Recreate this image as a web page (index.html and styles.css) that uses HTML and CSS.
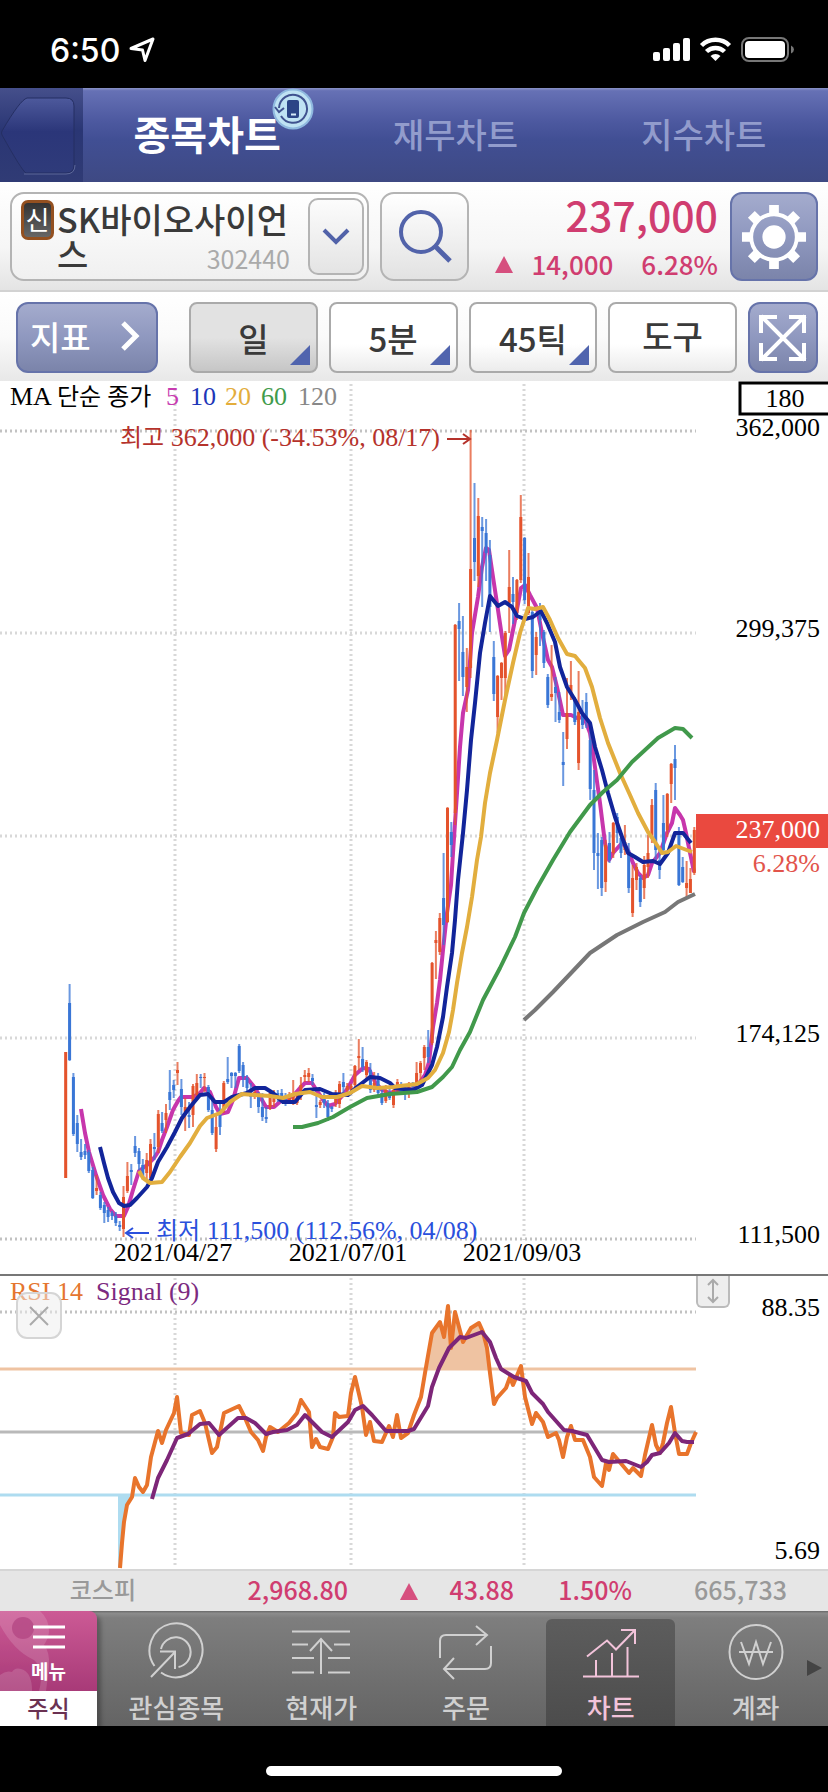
FILE: index.html
```html
<!DOCTYPE html>
<html lang="ko">
<head>
<meta charset="utf-8">
<meta name="viewport" content="width=device-width">
<title>종목차트</title>
<link rel="stylesheet" href="styles.css">
</head>
<body>
<header class="status">
  <span class="clock">6:50</span>
  <svg class="loc" viewBox="0 0 28 28"><path d="M3 12.500 25 3 17 24.500 14.500 14z" fill="none" stroke="#fff" stroke-width="3" stroke-linejoin="round"/></svg>
  <svg class="signals" viewBox="0 0 142 26">
    <g fill="#fff"><rect x="0" y="15" width="7" height="9" rx="2"/><rect x="10" y="11" width="7" height="13" rx="2"/><rect x="20" y="6" width="7" height="18" rx="2"/><rect x="30" y="1" width="7" height="23" rx="2"/></g>
    <g fill="none" stroke="#fff" stroke-width="4.500"><path d="M48.500 8.500a20 20 0 0 1 28 0"/><path d="M53.500 14.500a13 13 0 0 1 18 0"/></g>
    <path d="M57.500 19a7.500 7.500 0 0 1 10 0l-5 5z" fill="#fff"/>
    <rect x="89" y="1" width="46" height="23" rx="7" fill="none" stroke="#777" stroke-width="2"/>
    <rect x="92" y="4" width="40" height="17" rx="4" fill="#fff"/>
    <path d="M138 8.500q3 1.500 3 4t-3 4z" fill="#777"/>
  </svg>
</header>

<nav class="tabs">
  <button class="back" aria-label="뒤로"><svg viewBox="0 0 83 94">
    <defs><linearGradient id="bk" x2="0" y2="1"><stop offset="0" stop-color="#4d599c"/><stop offset=".45" stop-color="#2b3679"/><stop offset="1" stop-color="#2f3b7a"/></linearGradient></defs>
    <path d="M27 10h39q8 0 8 8v59q0 8-8 8H26Q22 83 2 47 1 45 2 43 20 12 27 10z" fill="url(#bk)" stroke="#252f63"/><path d="M24 86h42q9 0 9-9" fill="none" stroke="#5c6799"/>
  </svg></button>
  <button class="tab on">종목차트
    <svg class="rot" viewBox="0 0 42 42"><circle cx="21" cy="21" r="19.500" fill="#bfe2f3" stroke="#8fb8df" stroke-width="2"/><path d="M7 20A14 14 0 1 1 9 28" fill="none" stroke="#40528f" stroke-width="2"/><path d="M3 19l4 5 5-4" fill="none" stroke="#40528f" stroke-width="2"/><rect x="15" y="12" width="12" height="18" rx="2" fill="#2b4486"/><path d="M19 26.500h5" stroke="#d5eaf8" stroke-width="2"/></svg>
  </button>
  <button class="tab">재무차트</button>
  <button class="tab">지수차트</button>
</nav>

<section class="stock">
  <div class="picker">
    <span class="mark">신</span>
    <h1 class="name">SK바이오사이언스</h1>
    <span class="code">302440</span>
    <button class="drop" aria-label="종목 선택"><svg viewBox="0 0 28 20"><path d="M2 3l12 12L26 3" fill="none" stroke="#5162a9" stroke-width="4"/></svg></button>
  </div>
  <button class="search" aria-label="검색"><svg viewBox="0 0 60 60"><circle cx="26" cy="25" r="20" fill="none" stroke="#5263aa" stroke-width="4"/><path d="M40 39l15 15" stroke="#5263aa" stroke-width="5"/></svg></button>
  <div class="quote">
    <strong class="price">237,000</strong>
    <span class="up"></span><span class="diff">14,000</span><span class="diff rate">6.28%</span>
  </div>
  <button class="blue gear" aria-label="설정"><svg viewBox="-34 -34 68 68" fill="#fff">
    <g id="teeth"><path d="M-5-33H5v10H-5zM-5 23H5v10H-5z"/><path d="M-33-5v10h10V-5zM23-5v10h10V-5z"/></g>
    <use href="#teeth" transform="rotate(45)"/>
    <circle r="23.500" fill="none" stroke="#fff" stroke-width="4"/><circle r="12"/></svg></button>
</section>

<section class="tools">
  <button class="blue indi">지표<svg viewBox="0 0 20 32"><path d="M3 3l13 13L3 29" fill="none" stroke="#fff" stroke-width="5"/></svg></button>
  <button class="tool sel">일</button>
  <button class="tool more">5분</button>
  <button class="tool more">45틱</button>
  <button class="tool">도구</button>
  <button class="blue full" aria-label="전체 화면"><svg viewBox="0 0 48 48"><path d="M2 2l44 44M46 2L2 46M2 19V3h16M30 3h15v16M2 29v16h16M30 45h15V29" fill="none" stroke="#fff" stroke-width="4"/></svg></button>
</section>

<main>
<section class="pane">
<svg class="chart" viewBox="0 381 828 893">
  <g class="grid"><path d="M0 633H696M0 836H696M0 1038H696M175 384V1240M351 384V1240M524 384V1240"/><path class="edge" d="M0 431H696M0 1239H696"/></g>
  <polyline class="ma m5" points="81,1109 85,1133 89,1152 96,1175 103,1195 110,1209 116,1216 124,1216 128,1207 133,1190 139,1171 147,1165 154,1158 158,1152 162,1140 167,1127 173,1110 178,1101 181,1097 193,1097 200,1093 204,1088 210,1092 216,1107 220,1114 228,1112 233,1100 239,1078 247,1078 255,1088 262,1100 266,1107 274,1107 282,1100 293,1096 300,1088 305,1083 312,1083 317,1091 324,1101 328,1106 335,1104 343,1095 348,1088 355,1075 363,1068 369,1069 375,1082 382,1090 390,1093 400,1090 413,1089 420,1082 425,1075 429,1062 433,1027 437,1003 440,980 443,950 447,913 451,885 453,853 457,793 460,747 463,713 468,690 472,633 478,597 482,567 486,548 489,550 493,577 498,610 502,637 505,656 509,650 515,620 521,588 525,585 530,595 537,608 542,633 548,660 552,667 557,687 563,715 571,715 577,718 584,717 590,733 594,760 600,803 605,843 609,860 613,853 622,843 627,848 633,863 638,873 643,878 648,875 652,863 660,853 667,833 672,823 675,808 680,815 683,820 686,833 688,843 694,872"/>
  <g id="candles"></g>
  <polyline class="ma m10" points="100,1147 104,1163 108,1178 113,1192 119,1203 124,1206 130,1205 137,1198 147,1187 152,1178 158,1162 167,1147 175,1132 182,1118 190,1107 200,1095 208,1094 215,1102 224,1102 232,1097 247,1093 255,1088 265,1088 273,1093 283,1102 295,1102 305,1090 320,1089 332,1094 348,1095 357,1087 370,1077 380,1078 390,1083 395,1088 413,1090 422,1085 427,1075 432,1065 437,1047 443,1017 447,987 452,953 455,920 458,880 463,833 467,790 471,740 475,703 480,653 485,623 490,596 498,606 505,602 512,607 517,616 525,619 533,617 541,611 547,623 555,642 560,667 567,687 575,700 582,713 590,723 595,747 602,770 608,793 615,817 622,837 628,853 635,857 643,862 653,861 660,864 668,853 675,833 683,833 691,843"/>
  <polyline class="ma m20" points="139,1171 143,1178 150,1183 162,1182 170,1172 180,1157 190,1143 200,1126 207,1118 220,1113 230,1102 242,1094 255,1095 270,1096 283,1098 295,1094 310,1092 322,1097 337,1097 350,1093 362,1086 377,1088 393,1087 400,1086 417,1084 428,1078 435,1070 443,1053 449,1032 453,1010 457,983 462,953 467,927 472,897 477,860 481,837 485,803 490,773 497,740 505,700 513,663 520,633 528,608 535,609 543,607 550,620 558,638 567,654 575,656 585,668 592,687 600,718 608,743 620,773 630,795 638,813 648,832 655,842 662,853 668,852 676,846 692,852"/>
  <polyline class="ma m60" points="293,1127 302,1127 318,1123 333,1117 350,1107 367,1098 390,1094 417,1092 432,1087 443,1077 452,1067 460,1050 470,1032 483,1000 500,968 515,937 524,913 537,888 553,860 570,832 590,805 603,792 617,780 632,762 645,750 658,738 675,728 683,729 692,738"/>
  <polyline class="ma m120" points="524,1020 535,1010 553,992 572,972 590,953 617,935 643,922 665,912 678,902 695,894"/>
  <text x="10" y="405">MA <tspan class="ko">단순 종가</tspan></text>
  <text x="166" y="405" fill="#c73bb0">5</text><text x="190" y="405" fill="#1d36b8">10</text><text x="225" y="405" fill="#e3ad3c">20</text><text x="261" y="405" fill="#3f9b4c">60</text><text x="298" y="405" fill="#888">120</text>
  <text x="120" y="446" fill="#b5322b"><tspan class="ko">최고</tspan> 362,000 (-34.53%, 08/17)</text>
  <path d="M447 439h23m-7-5l7 5-7 5" fill="none" stroke="#b5322b" stroke-width="2"/>
  <text x="156" y="1239" fill="#2a50dc"><tspan class="ko">최저</tspan> 111,500 (112.56%, 04/08)</text>
  <path d="M149 1233h-23m7-5l-7 5 7 5" fill="none" stroke="#2a50dc" stroke-width="2"/>
  <g text-anchor="middle"><text x="173" y="1261">2021/04/27</text><text x="348" y="1261">2021/07/01</text><text x="522" y="1261">2021/09/03</text></g>
  <rect x="740" y="383" width="100" height="31" fill="#fff" stroke="#000" stroke-width="3"/>
  <text x="785" y="407" text-anchor="middle">180</text>
  <rect x="696" y="814" width="132" height="34" fill="#ea493f"/>
  <g text-anchor="end"><text x="820" y="436">362,000</text><text x="820" y="637">299,375</text><text x="820" y="838" fill="#fff">237,000</text><text x="820" y="872" fill="#e2544b">6.28%</text><text x="820" y="1042">174,125</text><text x="820" y="1243">111,500</text></g>
</svg>
</section>

<section class="pane rsi">
<svg class="chart" viewBox="0 1274 828 295">
  <path d="M0 1275H828" stroke="#777" stroke-width="2"/>
  <g class="grid"><path d="M175 1278V1568M351 1278V1568M524 1278V1568"/><path class="edge" d="M0 1312H696"/></g>
  <path d="M0 1369H696" stroke="#efc3a2" stroke-width="3"/><path d="M0 1432H696" stroke="#b9b9b9" stroke-width="3"/><path d="M0 1495H696" stroke="#aedcf0" stroke-width="3"/>
  <path d="M118 1495h15l-5 10-4 17-3 46h-3z" fill="#aedcf0"/>
  <path d="M426 1370l3-20 3-17 8-11 4 15 4-31 3 42 4-36 4 15 4 15 8-14 8-5 4 9 4 16 3 22z" fill="#efc3a2"/>
  <polyline class="ma rs" points="120,1568 122,1543 124,1522 127,1505 132,1497 135,1478 139,1487 143,1492 147,1485 151,1457 158,1431 162,1443 166,1430 174,1413 177,1397 181,1433 189,1435 192,1415 200,1411 205,1423 212,1453 217,1447 224,1413 239,1406 245,1418 251,1432 258,1440 263,1451 266,1437 270,1427 278,1432 289,1423 297,1413 301,1400 309,1412 312,1447 316,1439 320,1447 328,1449 333,1437 335,1413 339,1417 348,1416 351,1393 355,1377 362,1407 366,1435 370,1422 374,1441 382,1442 389,1426 393,1437 397,1415 401,1438 408,1433 414,1415 421,1397 425,1373 429,1350 432,1333 440,1322 444,1337 448,1306 451,1348 455,1312 459,1327 463,1342 471,1328 479,1323 483,1332 487,1348 490,1373 494,1404 497,1398 506,1388 510,1377 513,1385 521,1366 525,1397 532,1424 536,1413 543,1422 548,1437 556,1433 559,1440 563,1457 567,1437 571,1426 575,1440 583,1440 590,1457 594,1477 602,1486 606,1463 609,1470 613,1454 629,1473 633,1468 641,1476 645,1455 652,1425 656,1445 660,1453 663,1443 667,1423 671,1407 675,1433 679,1454 687,1454 691,1443 696,1432"/>
  <polyline class="ma sg" points="152,1499 158,1478 167,1460 177,1438 188,1434 200,1424 209,1423 219,1435 238,1418 246,1418 255,1423 266,1434 273,1432 287,1430 297,1425 305,1415 322,1432 332,1437 348,1422 355,1410 363,1406 372,1415 386,1431 408,1431 414,1429 428,1406 432,1387 439,1368 449,1348 460,1337 466,1338 482,1332 490,1342 496,1358 501,1369 514,1377 526,1381 532,1393 543,1404 548,1412 564,1430 572,1431 587,1435 602,1460 609,1462 626,1461 641,1467 647,1462 652,1455 660,1453 669,1443 675,1433 682,1441 687,1442 694,1442"/>
  <text x="10" y="1300" fill="#e5762f">RSI 14</text><text x="96" y="1300" fill="#7c2a80">Signal (9)</text>
  <g text-anchor="end"><text x="820" y="1316">88.35</text><text x="820" y="1559">5.69</text></g>
</svg>
<button class="close" aria-label="지표 닫기"><svg viewBox="0 0 20 20"><path d="M1 1l18 18M19 1L1 19" stroke="#aaa" stroke-width="2"/></svg></button>
<button class="resize" aria-label="크기 조절"><svg viewBox="0 0 14 26"><path d="M7 2v22M2 7l5-5 5 5M2 19l5 5 5-5" fill="none" stroke="#aaa" stroke-width="2"/></svg></button>
</section>
</main>

<section class="index">
  <span class="dim">코스피</span><span>2,968.80</span><span><i class="up"></i></span><span>43.88</span><span>1.50%</span><span class="dim num">665,733</span>
</section>

<nav class="dock">
  <button class="menu">
    <span class="pink">
      <svg class="swirl" viewBox="0 0 97 80" preserveAspectRatio="none"><g fill="#fff" opacity=".14"><path d="M0 0h40q9 8 9 20 0 6-5 14 6 7 5 22l-3 24h-7Q45 58 34 49 14 40 0 14z"/><path d="M0 64q6-5 12-3 3-5 9-3 11 3 11 22H0z"/></g><circle cx="23" cy="17" r="11" fill="#b14380" opacity=".7"/></svg>
      <svg class="bars" viewBox="0 0 32 26"><path d="M0 3h32M0 13h32M0 23h32" stroke="#fff" stroke-width="3"/></svg>
      <span>메뉴</span>
    </span>
    <span class="white">주식</span>
  </button>
  <button class="item"><svg viewBox="0 0 60 60"><path d="M8.500 44A26.500 27 0 1 1 15 50.500M15 27A15 15 0 1 1 32.500 45"/><path d="M5 55L29 30M14 29.500h15V47"/></svg>관심종목</button>
  <button class="item"><svg viewBox="0 0 60 60"><path d="M1 9.500h58M1 22.500h16M43 22.500h16M1 36h22M37 36h22M1 50.500h22M37 50.500h22M30 52V17M19 29L30 17l11 12"/></svg>현재가</button>
  <button class="item"><svg viewBox="0 0 60 60"><path d="M4 36V19q0-6 6-6h40M40 4l11 9-11 10M55 24v17q0 6-6 6H8M18 36L8 47l10 10"/></svg>주문</button>
  <button class="item on"><svg viewBox="0 0 60 60"><path d="M2 54.500h56M15 54V38M31 54V31M46.500 54V25M6 34.500l20-16 9 9L54 8M40 8h14v14"/></svg>차트</button>
  <button class="item"><svg viewBox="0 0 60 60"><ellipse cx="30" cy="30" rx="26.500" ry="27"/><path d="M15 20l8 22 7-22 7 22 8-22M13 30h34"/></svg>계좌</button>
  <span class="next"></span>
</nav>
<footer class="home"><span></span></footer>
<script src="chart.js"></script>
</body>
</html>
```
FILE: styles.css
```css
* { box-sizing: border-box; }
body {
  margin: 0;
  background: #000;
  font-family: "Noto Sans CJK KR", sans-serif;
  color: #3a3a3a;
}
button {
  font: inherit;
  color: inherit;
  margin: 0;
  padding: 0;
  border: 0;
  background: none;
}
svg { display: block; }

.status {
  display: flex;
  align-items: center;
  height: 88px;
  padding: 12px 33px 0 50px;
  color: #fff;
}
.clock { font: 500 32px Inter, sans-serif; }
.loc { width: 28px; margin-left: 8px; }
.signals { width: 142px; margin-left: auto; }

.tabs {
  display: flex;
  height: 94px;
  background: linear-gradient(#8a92c6 0, #6671b5 3%, #4d59a0 35%, #414f94 55%, #3e4983);
}
.back { width: 83px; background: linear-gradient(#454f8b, #2a3674 45%, #303b75); }
.tab {
  flex: 1;
  position: relative;
  padding-bottom: 4px;
  font-size: 34px;
  font-weight: 500;
  color: #929ccc;
}
.tab.on { font-size: 40px; color: #fff; font-weight: 700; }
.rot { position: absolute; top: 0; left: calc(50% + 65px); width: 42px; }

.stock {
  display: flex;
  height: 110px;
  padding: 10px 10px 0 10px;
  background: linear-gradient(#fff, #f6f6f6 60%, #e4e4e4);
  border-bottom: 2px solid #d2d2d2;
}
.picker, .search, .drop {
  border: 2px solid #b4b4b4;
  border-radius: 14px;
  background: linear-gradient(#fff, #f0f0f0);
}
.picker {
  position: relative;
  flex: 0 0 359px;
  height: 89px;
  display: flex;
  padding: 4px 3px 4px 9px;
  gap: 3px;
}
.mark {
  width: 33px;
  height: 40px;
  margin-top: 2px;
  border: 3px solid #935020;
  border-radius: 7px;
  background: linear-gradient(#333, #666);
  color: #fff;
  font-size: 26px;
  line-height: 32px;
  text-align: center;
}
.name {
  flex: 1;
  margin: 3px 0 0;
  font-size: 34px;
  line-height: 35px;
  font-weight: 500;
  word-break: break-all;
}
.code {
  position: absolute;
  right: 77px;
  bottom: 5px;
  font-size: 25px;
  line-height: 32px;
  color: #aaa;
}
.drop {
  width: 56px;
  display: grid;
  place-items: center;
  border-radius: 10px;
  background: linear-gradient(#fcfcfc, #e4e4e4);
}
.drop svg { width: 28px; }
.search {
  flex: 0 0 89px;
  height: 89px;
  margin-left: 11px;
  display: grid;
  place-items: center;
  background: linear-gradient(#fff, #e2e2e2);
}
.search svg { width: 60px; }
.quote {
  flex: 1;
  display: grid;
  grid-template-columns: 1fr auto auto;
  column-gap: 18px;
  align-content: start;
  align-items: center;
  justify-items: end;
  padding-right: 12px;
  color: #d03d70;
  font-weight: 500;
}
.price {
  grid-column: 1 / -1;
  font-size: 41px;
  line-height: 44px;
  font-weight: 500;
}
.diff { font-size: 26px; line-height: 56px; }
.rate { margin-left: 10px; }
.up {
  display: inline-block;
  border: 9px solid transparent;
  border-top: 0;
  border-bottom: 17px solid #d64f7e;
}
.blue {
  display: grid;
  place-items: center;
  border: 2px solid #6673aa;
  border-radius: 12px;
  background: linear-gradient(#a4abcd, #8f98bf 50%, #7b84aa);
  color: #fff;
}
.gear { flex: 0 0 88px; height: 89px; }
.gear svg { width: 66px; }

.tools {
  display: flex;
  gap: 11px;
  height: 89px;
  padding: 10px 10px 0 16px;
  background: linear-gradient(#fff, #fafafa 50%, #e8e8e8);
}
.tools button { height: 71px; }
.indi {
  flex: 0 0 142px;
  margin-right: 20px;
  grid-template-columns: auto auto;
  justify-content: space-between;
  padding: 0 16px 4px 12px;
  font-size: 33px;
  font-weight: 500;
}
.indi svg { width: 20px; }
.tool {
  position: relative;
  flex: 1;
  padding-bottom: 6px;
  border: 2px solid #aaa;
  border-radius: 8px;
  background: linear-gradient(#fff 60%, #ececec);
  font-size: 33px;
  font-weight: 500;
}
.tool.sel { background: linear-gradient(#e2e2e2 50%, #c6c6c6); }
.tool.sel, .tool.more { padding-bottom: 0; }
.sel::after, .more::after {
  content: "";
  position: absolute;
  right: 6px;
  bottom: 6px;
  border-left: 20px solid transparent;
  border-bottom: 20px solid #5064ae;
}
.full { flex: 0 0 70px; }
.full svg { width: 48px; }

main { background: #fff; }
.pane { position: relative; }
.chart { width: 100%; height: auto; overflow: hidden; }
.chart text { font: 26px "Liberation Serif", "Noto Sans CJK KR", serif; }
.chart .ko { font-size: 24px; }
.grid { fill: none; stroke: #d8d8d8; stroke-width: 3; stroke-dasharray: 2 3; }
.grid .edge { stroke: #c2c2c2; }
.ma { fill: none; stroke-width: 4; stroke-linejoin: round; }
.m5 { stroke: #c736ac; }
.m10 { stroke: #12259a; }
.m20 { stroke: #e2ae3e; }
.m60 { stroke: #41994b; }
.m120 { stroke: #777; }
.rs { stroke: #e8742c; }
.sg { stroke: #7d2678; }
.wick { stroke-width: 2; opacity: .75; }
.body { stroke-width: 3; }
.rise { stroke: #e4532c; }
.fall { stroke: #3976d6; }

.close, .resize {
  position: absolute;
  display: grid;
  place-items: center;
  border: 2px solid #d5d5d5;
}
.close {
  left: 16px;
  top: 18px;
  width: 46px;
  height: 47px;
  border-radius: 11px;
  background: #eeeeee80;
}
.close svg { width: 20px; }
.resize {
  left: calc(100% - 132px);
  top: 2px;
  width: 34px;
  height: 32px;
  border-top: 0;
  border-color: #bbb;
  border-radius: 0 0 6px 6px;
  background: #eee;
}
.resize svg { width: 14px; }

.index {
  display: grid;
  grid-template-columns: 136fr 212fr 70fr 96fr 118fr 155fr 41fr;
  align-items: center;
  height: 42px;
  padding-bottom: 4px;
  border-top: 2px solid #d6d6d6;
  background: #e6e6e6;
  color: #d03d70;
  font-size: 25px;
  line-height: 36px;
  font-weight: 500;
  text-align: right;
}
.dim { color: #999; font-size: 24px; }
.num { font-size: 25px; }

.dock {
  position: relative;
  display: flex;
  height: 115px;
  background: linear-gradient(#686868 0, #8c8c8c 2%, #7e7e7e 6%, #646464);
}
.menu {
  flex: 0 0 97px;
  margin-right: 7px;
  display: flex;
  flex-direction: column;
  border-radius: 0 8px 0 0;
  overflow: hidden;
  box-shadow: 4px 4px 4px #0004;
}
.pink {
  position: relative;
  width: 100%;
  height: 80px;
  padding-top: 13px;
  background: linear-gradient(#cc5a95, #a83a78);
  color: #fff;
  font-size: 19px;
  line-height: 30px;
  font-weight: 700;
}
.pink span { position: relative; display: block; padding-top: 6px; }
.swirl { position: absolute; top: 0; left: 0; width: 100%; height: 100%; }
.bars { position: relative; width: 32px; margin: 0 auto; }
.white {
  width: 100%;
  height: 35px;
  background: #fff;
  color: #6b3152;
  font-size: 23px;
  line-height: 33px;
  font-weight: 500;
}
.item {
  flex: 1;
  display: flex;
  flex-direction: column;
  align-items: center;
  margin: 8px 8px 0;
  padding-top: 3px;
  border-radius: 6px 6px 0 0;
  color: #d0d0d0;
  font-size: 26px;
  line-height: 50px;
  font-weight: 500;
  white-space: nowrap;
}
.item svg { width: 60px; flex: none; fill: none; stroke: currentColor; stroke-width: 2; }
.item.on { background: linear-gradient(#5d5d5d, #4c4c4c); color: #f2c3da; }
.next {
  position: absolute;
  right: 6px;
  top: 49px;
  border: 8px solid transparent;
  border-left: 15px solid #444;
  border-right: 0;
}
.home { display: flex; justify-content: center; height: 66px; padding-top: 40px; }
.home span { width: 296px; height: 10px; border-radius: 5px; background: #fff; }
```
FILE: chart.js
```js
// Daily candles: direction, high, body top, body bottom, low.
const candles = `r1052,1052,1178,1178 b984,1003,1060,1061 b1073,1077,1134,1136 b1115,1123,1144,1152 b1139,1152,1157,1160
b1144,1151,1155,1159 b1150,1152,1171,1173 b1167,1170,1198,1199 r1175,1188,1191,1195 b1192,1195,1208,1210
b1202,1205,1213,1223 b1207,1210,1217,1222 b1211,1213,1216,1220 b1212,1216,1223,1226 b1221,1225,1227,1231
r1186,1197,1229,1237 r1162,1176,1191,1193 b1164,1170,1172,1185 b1136,1146,1153,1157 b1148,1151,1164,1170
b1159,1165,1177,1180 r1153,1160,1173,1182 r1139,1144,1178,1183 b1133,1147,1149,1160 r1110,1114,1147,1153
b1112,1123,1131,1133 r1104,1113,1120,1133 b1070,1092,1100,1110 b1080,1085,1090,1098 r1062,1070,1073,1085
b1079,1089,1107,1115 r1098,1107,1112,1131 b1102,1115,1117,1128 r1084,1086,1115,1127 r1074,1083,1095,1097
b1074,1077,1078,1088 r1073,1077,1078,1092 b1085,1087,1110,1112 b1100,1110,1133,1135 r1113,1127,1149,1152
b1103,1110,1127,1135 r1081,1083,1110,1113 b1057,1079,1082,1084 b1072,1073,1076,1088 b1072,1073,1076,1088
b1044,1046,1071,1073 b1062,1065,1077,1087 b1075,1078,1088,1093 b1083,1090,1097,1108 r1087,1092,1097,1099
b1092,1095,1107,1113 b1093,1107,1117,1121 b1107,1117,1119,1123 r1091,1093,1107,1110 r1090,1093,1102,1107
b1090,1093,1097,1102 b1089,1093,1097,1103 b1093,1096,1102,1106 r1092,1096,1101,1104 r1080,1095,1100,1105
r1092,1094,1103,1105
r1077,1085,1095,1100 r1070,1075,1077,1082 r1068,1073,1077,1082 b1074,1078,1081,1085 b1095,1105,1107,1118
r1100,1102,1105,1108 b1093,1098,1103,1108 b1100,1103,1117,1121 b1106,1107,1109,1112 r1090,1095,1103,1107
r1081,1084,1104,1108 b1073,1082,1087,1093 r1083,1086,1090,1093 r1084,1086,1090,1094 r1065,1066,1085,1087
r1039,1056,1058,1070 b1047,1059,1067,1072 r1060,1062,1075,1080 b1063,1070,1090,1093 r1072,1083,1090,1092
b1073,1080,1093,1097 b1087,1093,1103,1105 r1085,1090,1101,1103 b1088,1092,1098,1100 r1087,1090,1105,1108
r1079,1082,1090,1093 b1082,1087,1093,1095 b1085,1088,1092,1100 r1082,1087,1090,1098 b1082,1084,1087,1092
r1062,1073,1085,1088 r1061,1063,1073,1080 r1045,1047,1058,1070 b1030,1047,1057,1063 r962,963,1043,1045
r931,940,943,979 r913,918,952,955 b853,898,925,945 r807,808,922,923 b822,832,845,857
r624,625,813,825 b603,621,629,681 b616,652,677,696 r648,667,687,712 r430,569,668,678
b483,538,562,581 r498,516,576,587 b517,527,531,607 b519,533,553,581 b540,555,607,632
b641,657,694,701 r675,676,717,733 r662,663,678,700 r631,633,678,698 r550,587,603,633
b577,594,602,624 r579,580,613,620 r495,517,580,583 b537,538,600,604 r553,577,613,615
b608,612,671,678 r632,637,655,675 b603,613,620,646 b630,632,663,668 b674,677,705,708
r645,694,697,701 b677,687,693,722 b692,712,720,723 b732,762,765,786 r678,713,739,749
r661,685,693,700 b697,700,722,725 r671,712,763,770 b700,713,725,729 b693,702,720,728
b725,740,789,800 b770,790,853,870 b833,853,856,889 b837,840,888,896 r840,845,882,892
b832,843,860,863 r822,823,853,858 b813,817,833,843 b835,838,853,858 r825,842,850,855
b843,850,888,893 r865,878,913,917 r863,867,880,890 b875,878,902,907 r856,865,888,899
r835,853,867,878 r799,805,838,843 b783,790,850,863 b850,860,870,879 b795,823,850,853
r793,794,830,837 r763,764,784,803 b745,759,768,800 b827,833,885,886 b857,867,882,883
r861,883,888,898 r868,879,893,893 r827,830,873,875`.split(/\s+/);

const FIRST_X = 65.7;
const LAST_X = 694.3;
const step = (LAST_X - FIRST_X) / (candles.length - 1);
const paths = { r: { wick: "", body: "" }, b: { wick: "", body: "" } };
candles.forEach((c, i) => {
  const [high, top, bottom, low] = c.slice(1).split(",");
  const x = (FIRST_X + i * step).toFixed(1);
  paths[c[0]].wick += `M${x} ${high}V${low}`;
  paths[c[0]].body += `M${x} ${top}V${bottom}`;
});
document.getElementById("candles").innerHTML = ["wick", "body"].map(part =>
  `<path class="${part} fall" d="${paths.b[part]}"/><path class="${part} rise" d="${paths.r[part]}"/>`).join("");
```
